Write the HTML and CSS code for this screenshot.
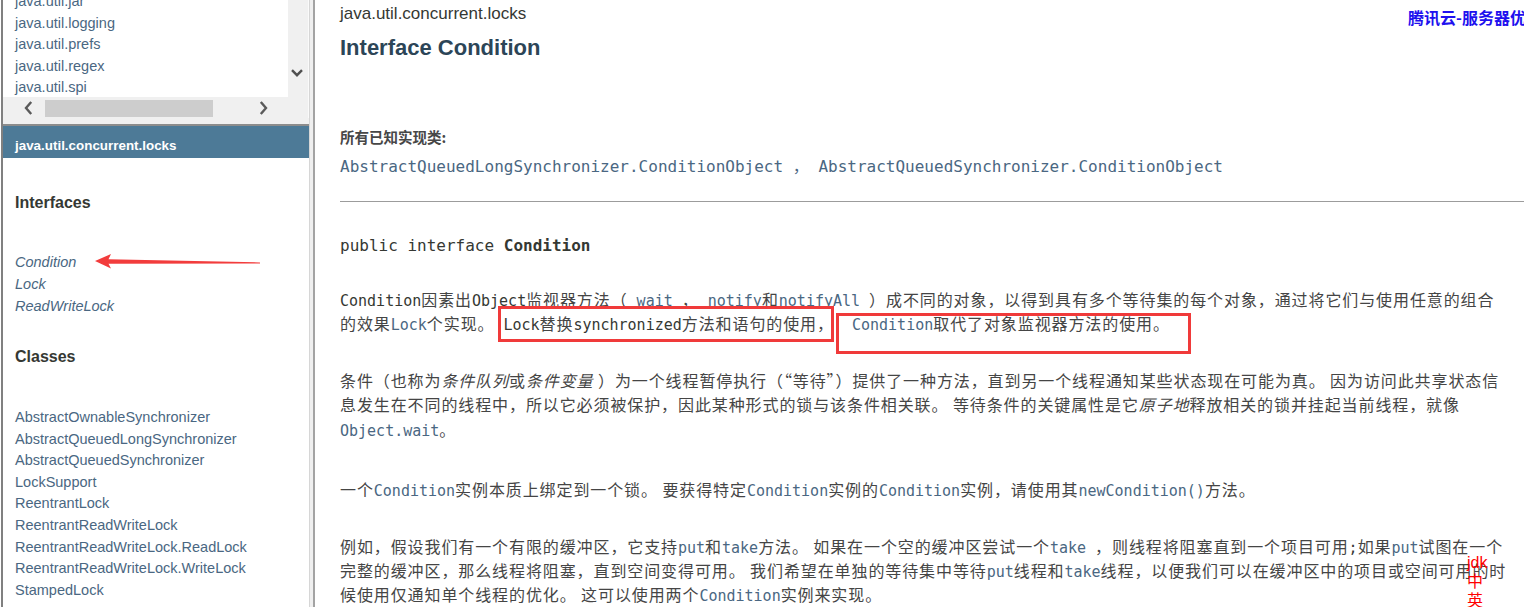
FILE: index.html
```html
<!DOCTYPE html>
<html lang="zh">
<head>
<meta charset="utf-8">
<title>Condition</title>
<link rel="stylesheet" href="styles.css">
</head>
<body>
<div class="page">
  <aside class="side">
    <div class="top-frame">
      <div class="pkg-list">
        <ul class="links top-links">
          <li>java.util.jar</li>
          <li>java.util.logging</li>
          <li>java.util.prefs</li>
          <li>java.util.regex</li>
          <li>java.util.spi</li>
        </ul>
      </div>
      <div class="vscroll">
        <svg width="12" height="8" viewBox="0 0 12 8"><path d="M1 1.2 L6 6.2 L11 1.2" fill="none" stroke="#505050" stroke-width="2.4"/></svg>
      </div>
      <div class="hscroll">
        <svg class="arr-l" width="9" height="14" viewBox="0 0 9 14"><path d="M7.2 1 L2 7 L7.2 13" fill="none" stroke="#5a5a5a" stroke-width="2.4"/></svg>
        <div class="thumb"></div>
        <svg class="arr-r" width="9" height="14" viewBox="0 0 9 14"><path d="M1.8 1 L7 7 L1.8 13" fill="none" stroke="#5a5a5a" stroke-width="2.4"/></svg>
      </div>
    </div>
    <div class="pkg-title">java.util.concurrent.locks</div>
    <div class="pkg-body">
      <h2 class="side-h first">Interfaces</h2>
      <ul class="links ital">
        <li>Condition</li>
        <li>Lock</li>
        <li>ReadWriteLock</li>
      </ul>
      <h2 class="side-h second">Classes</h2>
      <ul class="links classes">
        <li>AbstractOwnableSynchronizer</li>
        <li>AbstractQueuedLongSynchronizer</li>
        <li>AbstractQueuedSynchronizer</li>
        <li>LockSupport</li>
        <li>ReentrantLock</li>
        <li>ReentrantReadWriteLock</li>
        <li>ReentrantReadWriteLock.ReadLock</li>
        <li>ReentrantReadWriteLock.WriteLock</li>
        <li>StampedLock</li>
      </ul>
    </div>
  </aside>
  <div class="divider"></div>
  <main class="main">
    <div class="sub">java.util.concurrent.locks</div>
    <h1 class="title">Interface Condition</h1>
    <div class="impl-label">所有已知实现类:</div>
    <div class="impl">AbstractQueuedLongSynchronizer.ConditionObject <span class="cjk">，</span> AbstractQueuedSynchronizer.ConditionObject</div>
    <div class="rule"></div>
    <div class="decl">public interface <b>Condition</b></div>
    <p class="para first-para"><span class="m">Condition</span>因素出<span class="m">Object</span>监视器方法（<span class="k"> wait </span>，<span class="k"> notify</span>和<span class="k">notifyAll </span>）成不同的对象，以得到具有多个等待集的每个对象，通过将它们与使用任意的组合<br>的效果<span class="k">Lock</span>个实现。<span class="m"> Lock</span>替换<span class="m">synchronized</span>方法和语句的使用，<span class="k">&nbsp; Condition</span>取代了对象监视器方法的使用。</p>
    <p class="para">条件（也称为<i>条件队列</i>或<i>条件变量</i> ）为一个线程暂停执行（“等待”）提供了一种方法，直到另一个线程通知某些状态现在可能为真。 因为访问此共享状态信<br>息发生在不同的线程中，所以它必须被保护，因此某种形式的锁与该条件相关联。 等待条件的关键属性是它<i>原子地</i>释放相关的锁并挂起当前线程，就像<br><span class="k">Object.wait</span>。</p>
    <p class="para third-para">一个<span class="k">Condition</span>实例本质上绑定到一个锁。 要获得特定<span class="k">Condition</span>实例的<span class="k">Condition</span>实例，请使用其<span class="k">newCondition()</span>方法。</p>
    <p class="para">例如，假设我们有一个有限的缓冲区，它支持<span class="k">put</span>和<span class="k">take</span>方法。 如果在一个空的缓冲区尝试一个<span class="k">take </span>，则线程将阻塞直到一个项目可用<span class="m">;</span>如果<span class="k">put</span>试图在一个<br>完整的缓冲区，那么线程将阻塞，直到空间变得可用。 我们希望在单独的等待集中等待<span class="k">put</span>线程和<span class="k">take</span>线程，以便我们可以在缓冲区中的项目或空间可用的时<br>候使用仅通知单个线程的优化。 这可以使用两个<span class="k">Condition</span>实例来实现。</p>
  </main>
</div>

<svg class="arrow" width="175" height="22" viewBox="0 0 175 22">
  <polygon points="5,11 21,4 18.5,9.3 170,12.4 170,13.4 18.5,13.8 21,18.5" fill="#f23c3c"/>
</svg>
<div class="box box1"></div>
<div class="box box2"></div>
<div class="ad">腾讯云-服务器优惠</div>
<div class="jdk">jdk<br>中<br>英</div>
</body>
</html>
```

FILE: styles.css
```css
html, body {
  margin: 0;
  padding: 0;
  background: #fff;
  overflow: hidden;
}

body {
  width: 1524px;
  height: 607px;
  position: relative;
}

.page {
  display: flex;
  height: 607px;
}

/* ---------- sidebar ---------- */
.side {
  width: 306px;
  margin-left: 1px;
  border-left: 2px solid #808080;
  display: flex;
  flex-direction: column;
  font-family: "Liberation Sans", Arial, sans-serif;
  flex-shrink: 0;
}

.top-frame {
  display: grid;
  grid-template-columns: 285px 21px;
  grid-template-rows: 97px 21px;
  align-content: start;
  height: 124px;
  background: #f0f0f0;
  border-bottom: 2px solid #8c8c8c;
}

.pkg-list {
  grid-column: 1;
  grid-row: 1;
  background: #fff;
  overflow: hidden;
}

.links {
  list-style: none;
  margin: 0;
  padding: 0;
  font-size: 14.5px;
  color: #4a6782;
}

.top-links {
  margin-top: -9px;
  padding-left: 12px;
  line-height: 21.6px;
}

.vscroll {
  grid-column: 2;
  grid-row: 1 / span 2;
  display: flex;
  flex-direction: column;
  padding: 69px 0 0 3px;
  border-right: 1px solid #fafafa;
}

.hscroll {
  grid-column: 1;
  grid-row: 2;
  display: flex;
  align-items: center;
  padding-top: 1px;
}

.arr-l {
  margin-left: 21px;
}

.thumb {
  width: 168px;
  height: 17px;
  background: #cdcdcd;
  margin-left: 12px;
}

.arr-r {
  margin-left: 46px;
}

.pkg-title {
  height: 32px;
  box-sizing: border-box;
  padding: 12px 0 0 12px;
  background: #4d7a97;
  color: #fff;
  font-weight: bold;
  font-size: 13.4px;
  line-height: 16px;
}

.pkg-body {
  flex: 1;
  padding-left: 12px;
  background: #fff;
}

.side-h {
  margin: 0;
  font-size: 16px;
  line-height: 19px;
  font-weight: bold;
  color: #353833;
}

.side-h.first {
  margin-top: 35px;
  margin-bottom: 39px;
}

.side-h.second {
  margin-top: 30px;
  margin-bottom: 41px;
}

.ital {
  font-style: italic;
  line-height: 22px;
}

.classes {
  line-height: 21.6px;
}

.divider {
  width: 3px;
  flex-shrink: 0;
  background: #efefef;
  border-left: 1px solid #d6d6d6;
  border-right: 2px solid #a3a3a3;
}

/* ---------- main ---------- */
.main {
  flex: 1;
  padding-left: 25px;
  overflow: hidden;
  font-family: "Liberation Sans", Arial, sans-serif;
  color: #353833;
}

.sub {
  margin-top: 4px;
  font-size: 17px;
  line-height: 20px;
  color: #353833;
}

.title {
  margin: 11px 0 0;
  font-size: 22px;
  line-height: 26px;
  font-weight: bold;
  color: #2c4557;
}

.impl-label {
  margin-top: 66px;
  font-family: "Noto Sans CJK SC", sans-serif;
  font-weight: bold;
  font-size: 14.5px;
  line-height: 20px;
  color: #474747;
}

.impl {
  margin-top: 8px;
  font-family: "DejaVu Sans Mono", monospace;
  font-size: 16px;
  line-height: 20px;
  color: #4a6782;
  white-space: nowrap;
}

.cjk {
  font-family: "Noto Sans CJK SC", sans-serif;
}

.rule {
  margin-top: 24px;
  height: 1px;
  background: #9c9c9c;
}

.decl {
  margin-top: 34px;
  font-family: "DejaVu Sans Mono", monospace;
  font-size: 16px;
  line-height: 20px;
  color: #353833;
  white-space: nowrap;
}

.para {
  margin: 32.5px 0 0;
  font-family: "Noto Sans CJK SC", sans-serif;
  font-size: 16px;
  line-height: 24.3px;
  letter-spacing: 0.9px;
  color: #454545;
  white-space: nowrap;
}

.para.first-para {
  margin-top: 31px;
}

.para.third-para {
  margin-top: 36px;
}

.para i {
  font-style: italic;
}

.m, .k {
  font-family: "DejaVu Sans Mono", monospace;
  font-size: 15px;
  letter-spacing: 0;
  line-height: 1;
}

.m {
  color: #353833;
}

.k {
  color: #4a6782;
}

/* ---------- overlays ---------- */
.arrow {
  position: absolute;
  left: 90px;
  top: 250px;
}

.box {
  position: absolute;
  box-sizing: border-box;
  border: 3px solid #f03a3a;
}

.box1 {
  left: 498px;
  top: 306px;
  width: 336px;
  height: 36px;
}

.box2 {
  left: 836px;
  top: 313px;
  width: 355px;
  height: 41px;
}

.ad {
  position: absolute;
  left: 1408px;
  top: 8px;
  font-family: "Noto Sans CJK SC", sans-serif;
  font-weight: bold;
  font-size: 16px;
  line-height: 18px;
  color: #2010ee;
  white-space: nowrap;
}

.jdk {
  position: absolute;
  left: 1467px;
  top: 553px;
  font-family: "Liberation Sans", "Noto Sans CJK SC", sans-serif;
  font-size: 16px;
  line-height: 19px;
  color: #ff0000;
}
```
